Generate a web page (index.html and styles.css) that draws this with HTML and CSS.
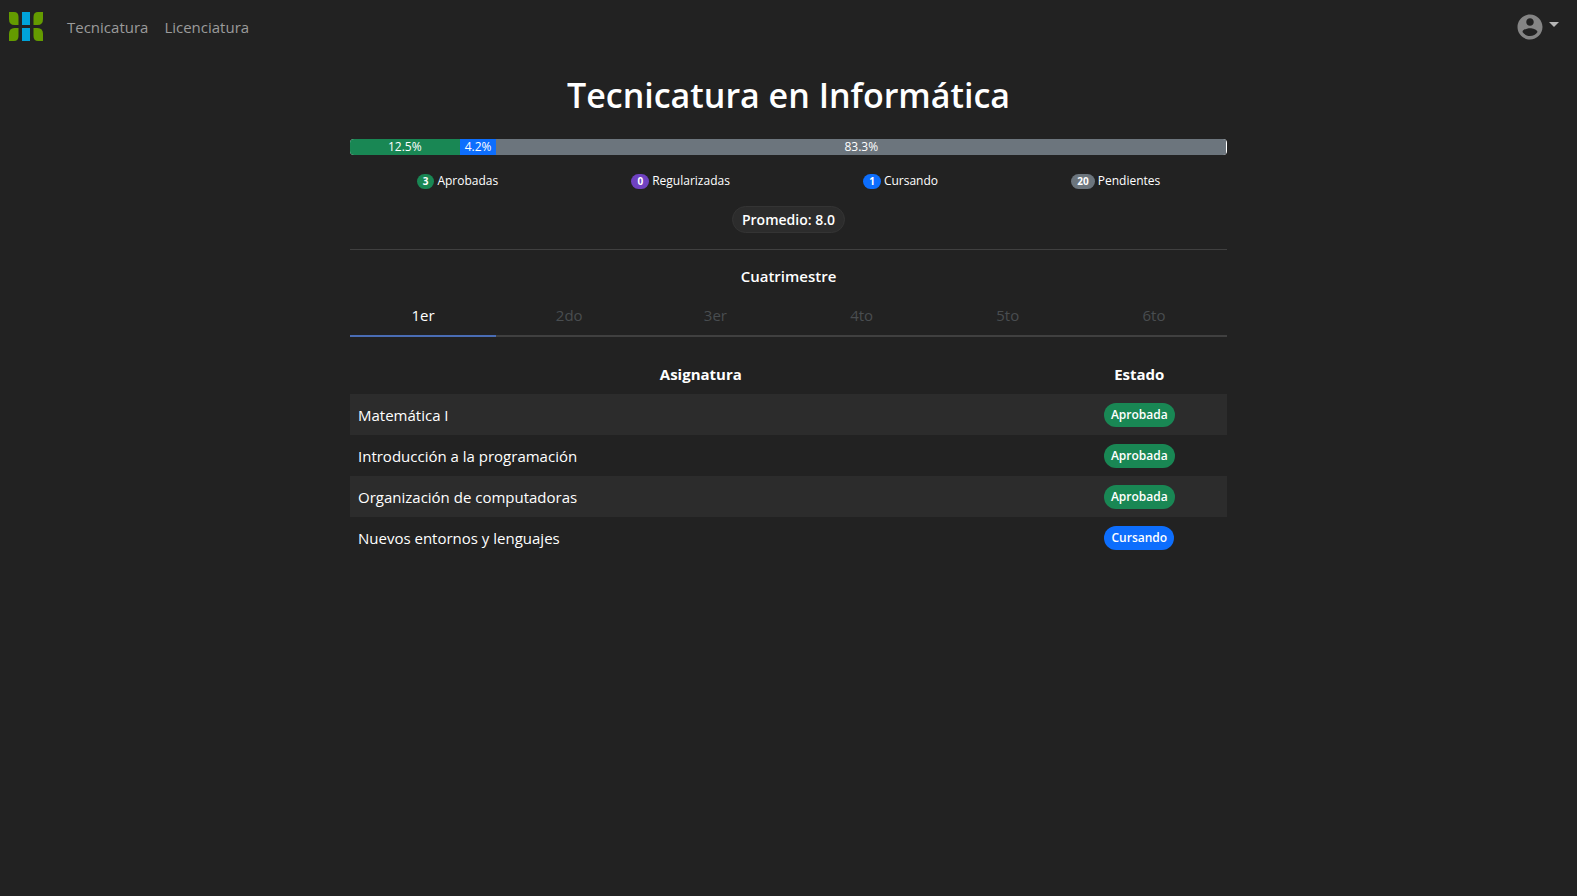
FILE: index.html
```html
<!DOCTYPE html>
<html lang="es">
<head>
<meta charset="utf-8">
<meta name="viewport" content="width=device-width, initial-scale=1">
<title>Tecnicatura en Informática</title>
<link rel="stylesheet" href="styles.css">
</head>
<body>
<nav class="navbar">
  <a class="brand" href="#" aria-label="Inicio">
    <svg width="34" height="30" viewBox="0 0 34 30" aria-hidden="true">
      <g fill="#649b00">
        <path d="M0 0h5q4.500 0 4.500 5v8h-4q-5.500 0-5.500-6z"/>
        <path d="M34 0h-5q-4.500 0-4.500 5v8h4q5.500 0 5.500-6z"/>
        <path d="M0 29h5q4.500 0 4.500-5v-8h-4q-5.500 0-5.500 6z"/>
        <path d="M34 29h-5q-4.500 0-4.500-5v-8h4q5.500 0 5.500 6z"/>
      </g>
      <path fill="#00a3d9" d="M13 0h8v13h-8zM13 16h8v13h-8z"/>
    </svg>
  </a>
  <a class="nav-link" href="#">Tecnicatura</a>
  <a class="nav-link" href="#">Licenciatura</a>
  <button class="account" type="button" aria-label="Cuenta">
    <svg width="30" height="30" viewBox="0 0 24 24" aria-hidden="true">
      <path fill="#858585" d="M12 2C6.480 2 2 6.480 2 12s4.480 10 10 10 10-4.480 10-10S17.520 2 12 2zm0 3c1.660 0 3 1.340 3 3s-1.340 3-3 3-3-1.340-3-3 1.340-3 3-3zm0 14.200c-2.500 0-4.710-1.280-6-3.220.030-1.990 4-3.080 6-3.080 1.990 0 5.970 1.090 6 3.080-1.290 1.940-3.500 3.220-6 3.220z"/>
    </svg>
    <span class="caret"></span>
  </button>
</nav>
<main class="page">
  <h1 class="title">Tecnicatura en Informática</h1>
  <div class="progress">
    <div class="bar green" style="width:12.5%">12.5%</div>
    <div class="bar blue" style="width:4.2%">4.2%</div>
    <div class="bar gray" style="width:83.2%">83.3%</div>
  </div>
  <div class="legend">
    <span class="legend-item"><b class="count green">3</b>Aprobadas</span>
    <span class="legend-item"><b class="count purple">0</b>Regularizadas</span>
    <span class="legend-item"><b class="count blue">1</b>Cursando</span>
    <span class="legend-item"><b class="count gray">20</b>Pendientes</span>
  </div>
  <div class="average">Promedio: 8.0</div>
  <hr class="divider">
  <h2 class="subtitle">Cuatrimestre</h2>
  <div class="tabs" role="tablist">
    <button class="tab active" type="button" role="tab" aria-selected="true">1er</button>
    <button class="tab" type="button" role="tab">2do</button>
    <button class="tab" type="button" role="tab">3er</button>
    <button class="tab" type="button" role="tab">4to</button>
    <button class="tab" type="button" role="tab">5to</button>
    <button class="tab" type="button" role="tab">6to</button>
  </div>
  <table class="subjects">
    <thead>
      <tr><th class="name-col">Asignatura</th><th>Estado</th></tr>
    </thead>
    <tbody>
      <tr><td>Matemática I</td><td class="state"><span class="badge green">Aprobada</span></td></tr>
      <tr><td>Introducción a la programación</td><td class="state"><span class="badge green">Aprobada</span></td></tr>
      <tr><td>Organización de computadoras</td><td class="state"><span class="badge green">Aprobada</span></td></tr>
      <tr><td>Nuevos entornos y lenguajes</td><td class="state"><span class="badge blue">Cursando</span></td></tr>
    </tbody>
  </table>
</main>
</body>
</html>
```
FILE: styles.css
```css
* { box-sizing: border-box; }
body {
  margin: 0;
  background: #222;
  color: #fff;
  font-family: "Open Sans", "Noto Sans", sans-serif;
  font-size: 15px;
  line-height: 24px;
}
button { font: inherit; background: none; border: 0; padding: 0; cursor: pointer; }
.green { background: #198754; }
.blue { background: #0d6efd; }
.gray { background: #6c757d; }
.purple { background: #6f42c1; }

.navbar { display: flex; align-items: center; height: 54px; padding: 0 16px 0 9px; }
.brand { display: flex; margin-right: 16px; }
.nav-link { padding: 0 8px; color: #9b9b9b; text-decoration: none; }
.account { display: flex; align-items: center; gap: 4px; margin-left: auto; }
.caret { margin: 0 2px 6px 0; border: 5px solid transparent; border-top-color: #b5b5b5; border-bottom: 0; }

.page { max-width: 877px; margin: 0 auto; padding-top: 17px; }
.title { margin: 0 0 20px; font-size: 34px; font-weight: 600; line-height: 48px; text-align: center; }
.progress { display: flex; height: 16px; overflow: hidden; border-radius: 4px; background: #fff; }
.bar { font-size: 12px; line-height: 16px; text-align: center; }
.legend { display: flex; justify-content: space-around; margin-top: 16px; font-size: 12px; line-height: 20px; }
.legend-item { display: flex; align-items: center; gap: 3px; }
.count { padding: 0 6px; border-radius: 8px; font-size: 10px; line-height: 15px; }
.average {
  width: fit-content;
  margin: 15px auto 0;
  padding: 0 9px;
  border: 1px solid #343434;
  border-radius: 14px;
  background: #2c2c2c;
  font-size: 14px;
  font-weight: 600;
  line-height: 25px;
}
.divider { margin: 16px 0 15px; border: 0; border-top: 1px solid #404040; }
.subtitle { margin: 0 0 8px; font-size: 15px; font-weight: 600; line-height: 22px; text-align: center; }
.tabs { display: flex; border-bottom: 2px solid #404040; }
.tab { flex: 1; margin-bottom: -2px; padding: 8px 0; border-bottom: 2px solid transparent; color: #494d50; }
.tab.active { border-color: #4a6db5; color: #fff; }
.subjects { width: 100%; margin-top: 17px; border-collapse: collapse; table-layout: fixed; }
.subjects th { padding: 8px; font-weight: 700; }
.name-col { width: 80%; }
.subjects td { height: 41px; padding: 0 8px; }
.subjects tbody tr:nth-child(odd) { background: #2c2c2c; }
.subjects .state { text-align: center; }
.badge { display: inline-block; padding: 0 7px; border-radius: 12px; font-size: 12px; font-weight: 600; line-height: 24px; vertical-align: middle; }
```
